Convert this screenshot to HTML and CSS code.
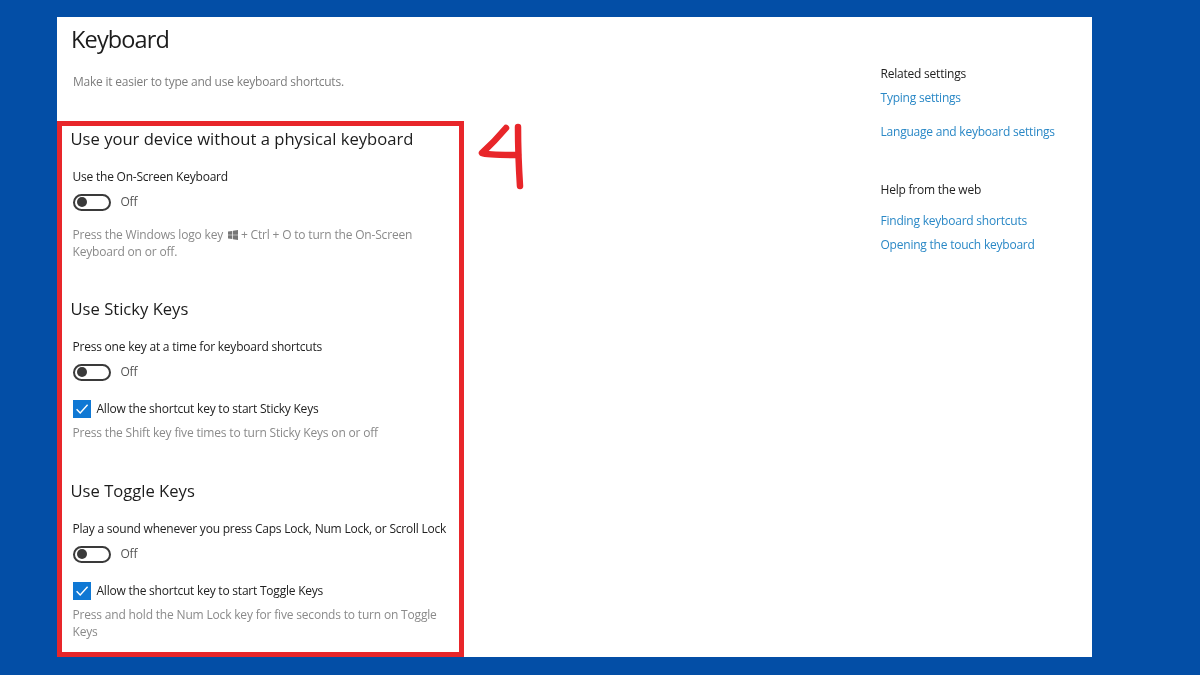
FILE: index.html
```html
<!DOCTYPE html>
<html lang="en">
<head>
<meta charset="utf-8">
<title>Keyboard</title>
<link rel="stylesheet" href="styles.css">
</head>
<body>
<div class="panel">
  <main class="main">
    <header class="head">
      <h1 class="title">Keyboard</h1>
      <p class="intro">Make it easier to type and use keyboard shortcuts.</p>
    </header>
    <div class="box">
      <section class="group g1">
        <h2 class="heading">Use your device without a physical keyboard</h2>
        <p class="label">Use the On-Screen Keyboard</p>
        <div class="switch-row"><span class="switch"><span class="knob"></span></span><span class="state">Off</span></div>
        <p class="hint hint-first">Press the Windows logo key <svg class="winlogo" viewBox="0 0 10 10"><path d="M0 1.6 4.3.9v3.8H0zM5 .8 10 0v4.7H5zM0 5.3h4.3v3.8L0 8.4zM5 5.3h5V10L5 9.2z"/></svg> + Ctrl + O to turn the On-Screen<br>Keyboard on or off.</p>
      </section>
      <section class="group g2">
        <h2 class="heading">Use Sticky Keys</h2>
        <p class="label">Press one key at a time for keyboard shortcuts</p>
        <div class="switch-row"><span class="switch"><span class="knob"></span></span><span class="state">Off</span></div>
        <div class="check-row"><span class="check"><svg viewBox="0 0 18 18"><path d="M3.6 9.2 7.2 13 14.6 4.8"/></svg></span><span class="check-label">Allow the shortcut key to start Sticky Keys</span></div>
        <p class="hint">Press the Shift key five times to turn Sticky Keys on or off</p>
      </section>
      <section class="group g3">
        <h2 class="heading">Use Toggle Keys</h2>
        <p class="label">Play a sound whenever you press Caps Lock, Num Lock, or Scroll Lock</p>
        <div class="switch-row"><span class="switch"><span class="knob"></span></span><span class="state">Off</span></div>
        <div class="check-row"><span class="check"><svg viewBox="0 0 18 18"><path d="M3.6 9.2 7.2 13 14.6 4.8"/></svg></span><span class="check-label">Allow the shortcut key to start Toggle Keys</span></div>
        <p class="hint">Press and hold the Num Lock key for five seconds to turn on Toggle<br>Keys</p>
      </section>
    </div>
  </main>
  <div class="marker">
    <svg viewBox="0 0 60 70" width="60" height="70"><path d="M29 8 Q18 21 5 33 Q10 35 41 35"/><path d="M41 7 Q41 35 43 66"/></svg>
  </div>
  <aside class="side">
    <h3 class="side-title">Related settings</h3>
    <a class="link link-typing" href="#">Typing settings</a>
    <a class="link link-lang" href="#">Language and keyboard settings</a>
    <h3 class="side-title side-help">Help from the web</h3>
    <a class="link link-find" href="#">Finding keyboard shortcuts</a>
    <a class="link link-open" href="#">Opening the touch keyboard</a>
  </aside>
</div>
</body>
</html>
```
FILE: styles.css
```css
* { box-sizing: border-box; }
html, body { margin: 0; height: 100%; }
body {
  background: #034ea6;
  padding: 17px 108px 18px 57px;
  font-family: "Open Sans", "Noto Sans", sans-serif;
  overflow: hidden;
}
.panel {
  display: flex;
  height: 640px;
  background: #fff;
  filter: blur(0.3px);
}
.main {
  width: 407px;
  flex: none;
  display: flex;
  flex-direction: column;
}
.head { height: 104px; padding-left: 14px; }
.title {
  margin: 7px 0 0;
  font-size: 23.5px;
  line-height: 30px;
  font-weight: 400;
  color: #1c1c1c;
  letter-spacing: -0.85px;
}
.intro {
  margin: 18px 0 0 2px;
  font-size: 12px;
  line-height: 20px;
  letter-spacing: -0.22px;
  color: #7d7d7d;
}
.box {
  height: 536px;
  border: 5.5px solid #e8262a;
  padding: 0 0 0 8.5px;
}
.group { display: flex; flex-direction: column; align-items: flex-start; }
.g1 { padding-top: 1px; }
.g2 { padding-top: 37px; }
.g3 { padding-top: 38px; }
.heading {
  margin: 0;
  font-size: 16.6px;
  line-height: 24px;
  font-weight: 400;
  color: #1c1c1c;
}
.label {
  margin: 17px 0 0 2px;
  font-size: 12px;
  line-height: 18px;
  letter-spacing: -0.22px;
  color: #222;
  white-space: nowrap;
}
.switch-row { display: flex; align-items: center; margin: 7px 0 0 2px; height: 18px; }
.switch {
  display: flex;
  align-items: center;
  width: 38px;
  height: 17px;
  border: 2px solid #3a3a3a;
  border-radius: 9px;
  padding-left: 2.5px;
}
.knob { width: 10px; height: 10px; border-radius: 50%; background: #3a3a3a; }
.state { margin-left: 10px; font-size: 12px; line-height: 18px; letter-spacing: -0.22px; color: #555; }
.hint {
  margin: 6px 0 0 2px;
  font-size: 12px;
  line-height: 17px;
  letter-spacing: -0.18px;
  color: #8a8a8a;
  white-space: nowrap;
}
.hint-first { margin-top: 15px; }
.winlogo { width: 10px; height: 10px; margin: 0 0 0 2px; fill: #777; vertical-align: -1px; }
.check-row { display: flex; align-items: center; margin: 19px 0 0 2px; height: 18px; }
.check { width: 18px; height: 18px; background: #0f78d4; display: flex; }
.check svg { width: 18px; height: 18px; fill: none; stroke: #fff; stroke-width: 1.4; }
.check-label { margin-left: 6px; font-size: 12px; line-height: 18px; letter-spacing: -0.22px; color: #222; white-space: nowrap; }
.marker { width: 60px; height: 70px; margin-top: 103px; margin-left: 13px; flex: none; }
.marker svg { display: block; fill: none; stroke: #e8262a; stroke-width: 6.5; stroke-linecap: round; stroke-linejoin: round; }
.side {
  margin-left: 343.5px;
  padding-top: 48px;
  display: flex;
  flex-direction: column;
  align-items: flex-start;
  font-size: 12px;
  line-height: 18px;
  letter-spacing: -0.22px;
}
.side-title { margin: 0; font-size: 12px; line-height: 18px; font-weight: 400; color: #222; white-space: nowrap; }
.link { color: #2a88c6; text-decoration: none; white-space: nowrap; }
.link-typing { margin-top: 6px; }
.link-lang { margin-top: 16px; }
.side-help { margin-top: 40px; }
.link-find { margin-top: 13px; }
.link-open { margin-top: 6px; }
```
